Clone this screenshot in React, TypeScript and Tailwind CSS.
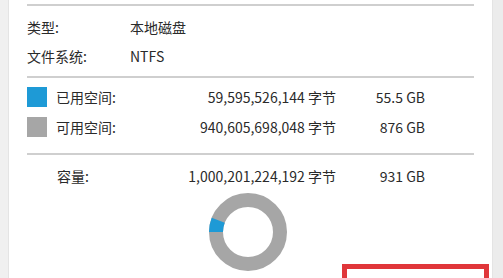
const font = { fontFamily: '"Segoe UI", "Noto Sans CJK SC", "Liberation Sans", sans-serif' };

function Donut() {
  // used share 55.5 / 931
  const share = 55.5 / 931;
  const r = 32;
  const c = 2 * Math.PI * r;
  return (
    <svg width="80" height="80" viewBox="0 0 80 80">
      <circle cx="40" cy="40" r={r} fill="none" stroke="#a6a6a6" strokeWidth="14" />
      <circle
        cx="40"
        cy="40"
        r={r}
        fill="none"
        stroke="#1e9ad6"
        strokeWidth="14"
        strokeDasharray={`${c * share} ${c}`}
        transform="rotate(180 40 40)"
      />
    </svg>
  );
}

function SpaceRow({ color, label, bytes, size }: { color: string; label: string; bytes: string; size: string }) {
  return (
    <div className="flex h-[30px] items-center">
      <div className={`h-5 w-5 ${color}`} />
      <div className="w-[100px] pl-[9px]">{label}</div>
      <div className="w-[189px] text-right">{bytes}</div>
      <div className="w-[89px] text-right">{size}</div>
    </div>
  );
}

export default function App() {
  return (
    <div className="flex h-[278px] w-[503px] overflow-hidden bg-white text-[14px] text-[#2a2a2a]" style={font}>
      <div className="w-[9px] shrink-0 border-r border-[#e4e4e4] bg-[#f0f0f0]" />
      <div className="relative flex-1 pl-[18px] pr-[18px]">
        <div className="mt-[4px] h-[2px] bg-[#cfcfcf]" />
        <div className="flex h-[29px] items-center pt-[14px]">
          <div className="w-[103px]">类型:</div>
          <div>本地磁盘</div>
        </div>
        <div className="flex h-[29px] items-center pt-[14px]">
          <div className="w-[103px]">文件系统:</div>
          <div>NTFS</div>
        </div>
        <div className="mt-[12px] h-[2px] bg-[#cfcfcf]" />
        <div className="pt-[4px]">
          <SpaceRow color="bg-[#1e9ad6]" label="已用空间:" bytes="59,595,526,144 字节" size="55.5 GB" />
          <SpaceRow color="bg-[#a6a6a6]" label="可用空间:" bytes="940,605,698,048 字节" size="876 GB" />
        </div>
        <div className="mt-[11px] h-[2px] bg-[#cfcfcf]" />
        <div className="flex h-[30px] items-center pt-[12px]">
          <div className="w-[120px] pl-[30px]">容量:</div>
          <div className="w-[189px] text-right">1,000,201,224,192 字节</div>
          <div className="w-[89px] text-right">931 GB</div>
        </div>
        <div className="flex justify-center pr-[5px] pt-[7px]">
          <Donut />
        </div>
        <div className="absolute left-[333px] top-[264px] h-[30px] w-[147px] border-[5px] border-[#e0363a] bg-white" />
      </div>
      <div className="w-[11px] shrink-0 border-l border-[#e4e4e4] bg-[#ececec]" />
    </div>
  );
}
